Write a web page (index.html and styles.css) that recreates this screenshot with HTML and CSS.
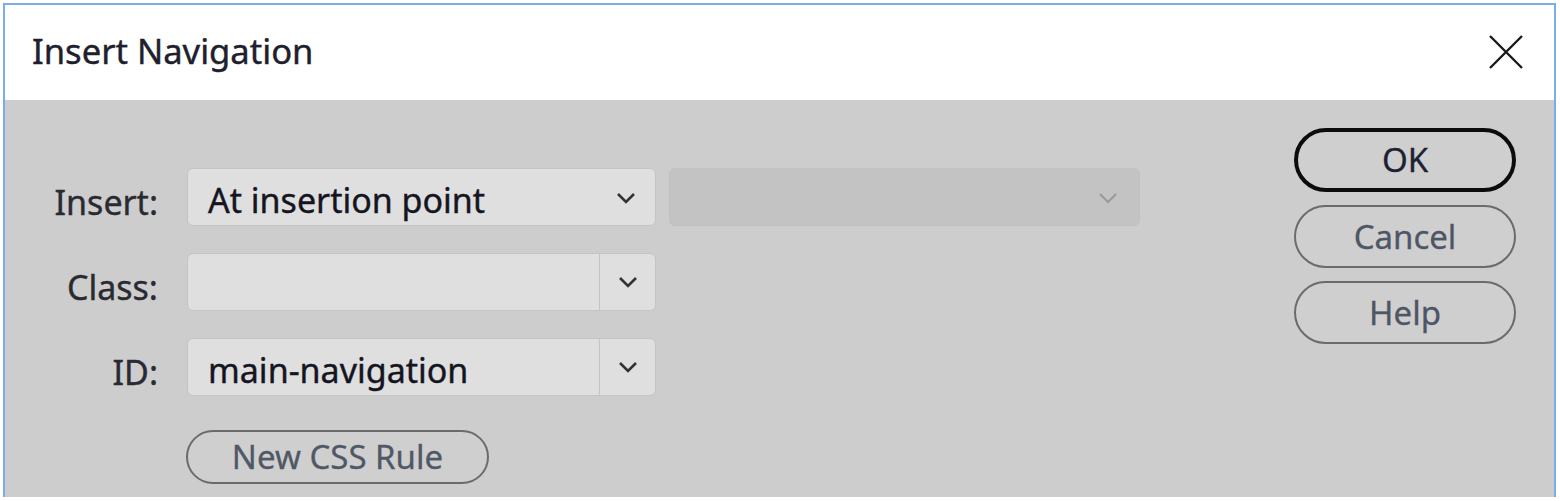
FILE: index.html
```html
<!DOCTYPE html>
<html>
<head>
<meta charset="utf-8">
<title>Insert Navigation</title>
<link rel="stylesheet" href="styles.css">
</head>
<body>
<div class="dialog">
  <div class="titlebar">
    <span class="title">Insert Navigation</span>
    <svg class="close" width="36" height="36" viewBox="0 0 36 36" aria-label="Close">
      <path d="M2 2 L34 34 M34 2 L2 34" stroke="#1a1a1a" stroke-width="2.4" fill="none"/>
    </svg>
  </div>
  <div class="body">
    <div class="form">
      <label class="lbl">Insert:</label>
      <div class="ctrl-row">
        <div class="select">
          <span class="val">At insertion point</span>
          <svg class="chev" width="20" height="12" viewBox="0 0 20 12"><path d="M2 2 L10 10 L18 2" stroke="#333" stroke-width="2.6" fill="none"/></svg>
        </div>
        <div class="select disabled">
          <span class="val"></span>
          <svg class="chev" width="20" height="12" viewBox="0 0 20 12"><path d="M2 2 L10 10 L18 2" stroke="#9a9a9a" stroke-width="2" fill="none"/></svg>
        </div>
      </div>

      <label class="lbl">Class:</label>
      <div class="combo">
        <div class="combo-field"></div>
        <div class="combo-btn"><svg class="chev" width="20" height="12" viewBox="0 0 20 12"><path d="M2 2 L10 10 L18 2" stroke="#333" stroke-width="2.6" fill="none"/></svg></div>
      </div>

      <label class="lbl">ID:</label>
      <div class="combo">
        <div class="combo-field">main-navigation</div>
        <div class="combo-btn"><svg class="chev" width="20" height="12" viewBox="0 0 20 12"><path d="M2 2 L10 10 L18 2" stroke="#333" stroke-width="2.6" fill="none"/></svg></div>
      </div>

      <span></span>
      <button class="pill new-rule">New CSS Rule</button>
    </div>

    <div class="actions">
      <button class="pill ok">OK</button>
      <button class="pill">Cancel</button>
      <button class="pill">Help</button>
    </div>
  </div>
</div>
</body>
</html>
```

FILE: styles.css
```css
html, body {
  margin: 0;
  padding: 0;
  background: #ffffff;
}

body {
  font-family: "Noto Sans", "Open Sans", "DejaVu Sans", sans-serif;
  font-size: 34px;
  color: #1a1a26;
  -webkit-text-stroke: 0.4px currentColor;
}

.dialog {
  margin: 3px 0 0 3px;
  width: 1553px;
  box-sizing: border-box;
  border: 2px solid #79afe6;
  border-bottom: none;
  background: #ffffff;
}

.titlebar {
  height: 95px;
  display: flex;
  align-items: center;
  justify-content: space-between;
  padding: 0 30px 0 27px;
  background: #ffffff;
}

.title {
  font-size: 34.6px;
  color: #20202c;
  line-height: 40px;
  margin-top: -3px;
}

.close {
  display: block;
  margin-top: -1px;
}

.body {
  background: #cdcdcd;
  height: 397px;
  display: flex;
  justify-content: space-between;
  padding-top: 28px;
  box-sizing: border-box;
}

.form {
  margin-top: 40px;
  display: grid;
  grid-template-columns: 153px auto;
  grid-template-rows: 58px 58px 58px 54px;
  column-gap: 29px;
  row-gap: 27px;
  align-items: start;
  align-content: start;
}

.lbl {
  justify-self: end;
  font-size: 34px;
  line-height: 44px;
  padding-top: 12px;
  color: #2a2a32;
}

.ctrl-row {
  display: flex;
  gap: 13px;
}

.select {
  width: 469px;
  height: 58px;
  box-sizing: border-box;
  border: 1px solid #c4c4c4;
  border-radius: 6px;
  background: #dfdfdf;
  display: flex;
  align-items: flex-start;
  justify-content: space-between;
  padding: 9px 19px 0 20px;
}

.select .val {
  line-height: 44px;
  color: #15151f;
}

.select .chev {
  margin-top: 14px;
}

.select.disabled {
  width: 471px;
  background: #c3c3c3;
  border-color: #c1c1c1;
  padding-right: 21px;
}

.combo {
  width: 469px;
  height: 58px;
  box-sizing: border-box;
  border: 1px solid #c4c4c4;
  border-radius: 6px;
  background: #dfdfdf;
  display: flex;
}

.combo-field {
  flex: 1;
  padding: 9px 0 0 20px;
  line-height: 44px;
  color: #15151f;
  border-right: 1px solid #c4c4c4;
}

.combo-btn {
  width: 55px;
  display: flex;
  align-items: center;
  justify-content: center;
}

.combo-btn .chev {
  margin-top: 0;
}

.pill {
  font-family: "Noto Sans", "Open Sans", "DejaVu Sans", sans-serif;
  font-size: 33px;
  line-height: 40px;
  background: #cfcfcf;
  border: 2px solid #6b6b6b;
  border-radius: 32px;
  color: #4e5666;
  padding: 0;
  display: flex;
  align-items: center;
  justify-content: center;
  box-sizing: border-box;
  -webkit-text-stroke: 0.3px currentColor;
}

.new-rule {
  margin-top: 7px;
  width: 303px;
  height: 54px;
  border-radius: 27px;
  color: #505866;
  justify-self: start;
  margin-left: -1px;
}

.actions {
  margin-right: 38px;
  display: flex;
  flex-direction: column;
  gap: 13px;
}

.actions .pill {
  width: 222px;
  height: 63px;
}

.actions .pill.ok {
  border: 4px solid #0c0c0c;
  color: #1c2232;
  height: 64px;
}
```
